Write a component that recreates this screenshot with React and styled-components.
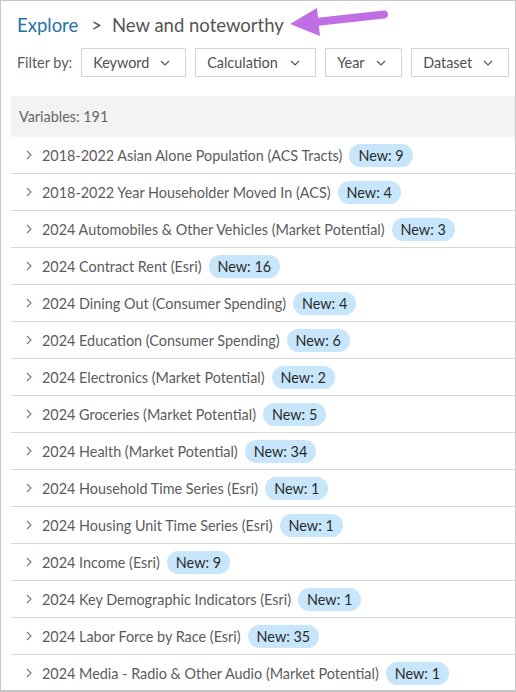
import styled, { createGlobalStyle } from 'styled-components'

const GlobalStyle = createGlobalStyle`
  html, body { margin: 0; padding: 0; background: #fff; }
  body { font-family: Lato, "Noto Sans", sans-serif; }
`

const rows = [
  ['2018-2022 Asian Alone Population (ACS Tracts)', 9],
  ['2018-2022 Year Householder Moved In (ACS)', 4],
  ['2024 Automobiles & Other Vehicles (Market Potential)', 3],
  ['2024 Contract Rent (Esri)', 16],
  ['2024 Dining Out (Consumer Spending)', 4],
  ['2024 Education (Consumer Spending)', 6],
  ['2024 Electronics (Market Potential)', 2],
  ['2024 Groceries (Market Potential)', 5],
  ['2024 Health (Market Potential)', 34],
  ['2024 Household Time Series (Esri)', 1],
  ['2024 Housing Unit Time Series (Esri)', 1],
  ['2024 Income (Esri)', 9],
  ['2024 Key Demographic Indicators (Esri)', 1],
  ['2024 Labor Force by Race (Esri)', 35],
  ['2024 Media - Radio & Other Audio (Market Potential)', 1],
]

const filters = [
  ['Keyword', 105],
  ['Calculation', 121],
  ['Year', 77],
  ['Dataset', 98],
]

const ChevronDown = () => (
  <svg width="10" height="6" viewBox="0 0 10 6">
    <path d="M1 1 L5 5 L9 1" fill="none" stroke="#555" strokeWidth="1.2" />
  </svg>
)

const ChevronRight = () => (
  <svg width="6" height="10" viewBox="0 0 6 10">
    <path d="M1 1 L5 5 L1 9" fill="none" stroke="#777" strokeWidth="1.1" />
  </svg>
)

const Arrow = () => (
  <ArrowMark width="104" height="36" viewBox="0 0 104 36">
    <line x1="30" y1="18" x2="98" y2="10.5" stroke="#bf6fe3" strokeWidth="8" strokeLinecap="round" />
    <polygon points="4,20 31,4 34,32" fill="#bf6fe3" />
  </ArrowMark>
)

const App = () => {
  return (
    <Frame>
      <GlobalStyle />
      <Header>
        <Title>
          <Crumb>Explore</Crumb>
          <Sep>&gt;</Sep>
          <Current>New and noteworthy</Current>
        </Title>
        <Arrow />
      </Header>
      <FilterBar>
        <FilterLabel>Filter by:</FilterLabel>
        {filters.map(([label, w]) => (
          <Dropdown key={label} $w={w}>
            <span>{label}</span>
            <ChevronDown />
          </Dropdown>
        ))}
      </FilterBar>
      <List>
        <ListHeader>Variables: 191</ListHeader>
        {rows.map(([name, n]) => (
          <Row key={name}>
            <Toggle><ChevronRight /></Toggle>
            <RowName>{name}</RowName>
            <Badge>New: {n}</Badge>
          </Row>
        ))}
      </List>
    </Frame>
  )
}

export default App

const Frame = styled.div`
  box-sizing: border-box;
  width: 516px;
  height: 692px;
  border: 1px solid #c6c6c6;
  border-bottom-width: 2px;
  overflow: hidden;
  display: flex;
  flex-direction: column;
`

const Header = styled.div`
  position: relative;
  padding: 10px 0 0 16px;
  height: 30px;
`

const Title = styled.div`
  font-size: 18.5px;
  line-height: 28px;
  color: #555;
  white-space: nowrap;
`

const Crumb = styled.span`
  color: #2471a6;
`

const Sep = styled.span`
  margin: 0 10px 0 13px;
  color: #555;
`

const Current = styled.span`
  color: #555;
`

const ArrowMark = styled.svg`
  position: absolute;
  left: 285px;
  top: 3px;
`

const FilterBar = styled.div`
  display: flex;
  align-items: center;
  gap: 9px;
  padding-left: 16px;
  margin-top: 9px;
`

const FilterLabel = styled.span`
  font-size: 14.4px;
  color: #5a5a5a;
`

const Dropdown = styled.div`
  box-sizing: border-box;
  width: ${p => p.$w}px;
  height: 29px;
  border: 1px solid #d4d4d4;
  display: flex;
  align-items: center;
  justify-content: space-between;
  padding: 0 15px 0 11px;
  font-size: 14.4px;
  color: #505050;
`

const List = styled.div`
  margin: 19px 0 0 10px;
  flex: 1;
`

const ListHeader = styled.div`
  height: 41px;
  background: #f3f3f3;
  display: flex;
  align-items: center;
  padding-left: 8px;
  font-size: 14.4px;
  color: #666;
`

const Row = styled.div`
  height: 36px;
  border-bottom: 1px solid #d8d8d8;
  display: flex;
  align-items: center;
  white-space: nowrap;
`

const Toggle = styled.span`
  width: 31px;
  display: flex;
  justify-content: flex-end;
  padding-right: 10px;
  box-sizing: border-box;
`

const RowName = styled.span`
  font-size: 14.4px;
  color: #5c5c5c;
`

const Badge = styled.span`
  margin-left: 7px;
  height: 23px;
  padding: 0 9px;
  border-radius: 12px;
  background: #c7e6fb;
  color: #2a2a2a;
  font-size: 14.4px;
  display: flex;
  align-items: center;
`
